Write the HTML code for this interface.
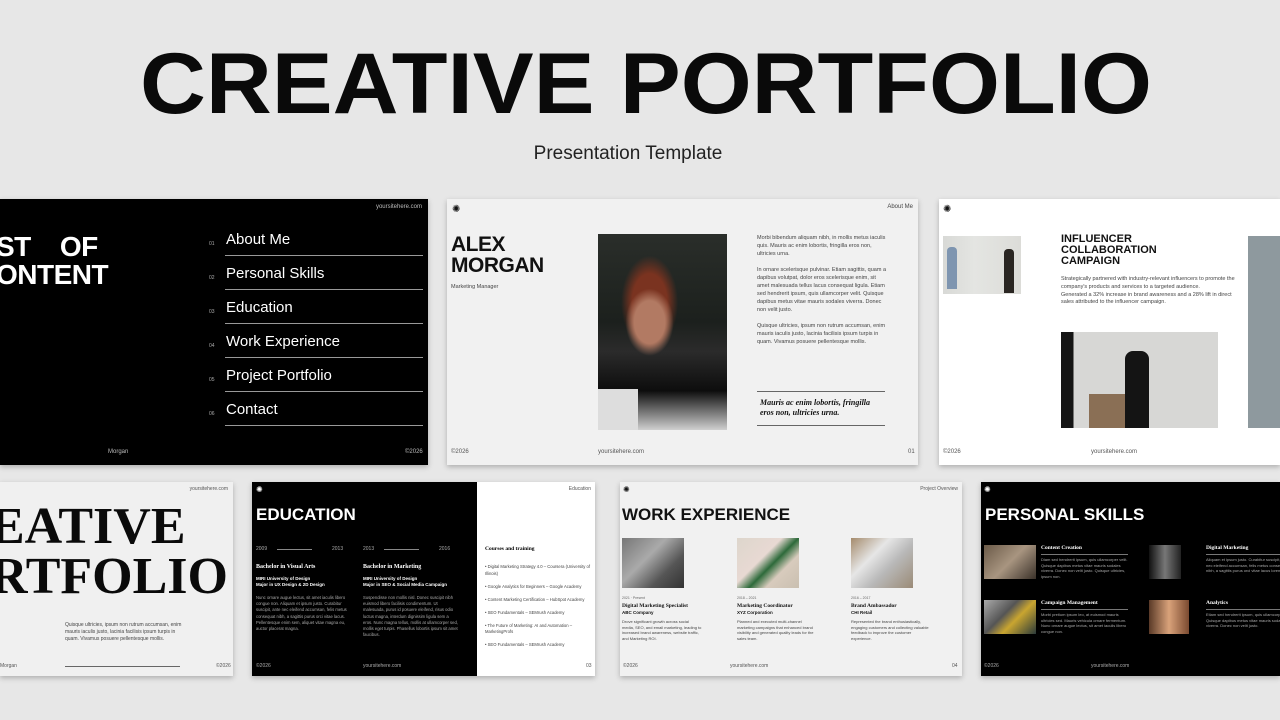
<!DOCTYPE html>
<html><head><meta charset="utf-8"><style>
*{margin:0;padding:0;box-sizing:border-box}
body{width:1280px;height:720px;background:#e7e7e7;position:relative;overflow:hidden;font-family:"Liberation Sans",sans-serif}
.a{position:absolute}
.s{position:absolute;overflow:hidden;box-shadow:0 2px 5px rgba(0,0,0,.25)}
.t{position:absolute;white-space:nowrap}
.sm{font-size:5.5px;line-height:8px;color:#555}
.w .sm{color:#aaa}
.ser{font-family:"Liberation Serif",serif;font-weight:bold}
.ln{position:absolute;height:1px}
</style></head><body>
<svg class="a" style="left:0;top:0" width="1280" height="180">
<text x="140" y="113" textLength="1012" lengthAdjust="spacingAndGlyphs" font-family="Liberation Sans" font-weight="bold" font-size="86" fill="#0a0a0a">CREATIVE PORTFOLIO</text>
<text x="628" y="159" text-anchor="middle" font-family="Liberation Sans" font-size="19" fill="#222">Presentation Template</text>
</svg>

<!-- Slide A -->
<div class="s" style="left:0;top:199px;width:428px;height:266px;background:#000;color:#fff">
 <div class="t" style="left:-4px;top:34px;font-size:28px;line-height:28px;font-weight:bold;letter-spacing:-0.5px">ST&nbsp;&nbsp;&nbsp;&nbsp;OF<br>ONTENT</div>
 <div class="t" style="right:6px;top:5px;font-size:6px;color:#bbb">yoursitehere.com</div>
 <div class="t" style="left:209px;top:28px;font-size:5px;color:#aaa;line-height:34px">01<br>02<br>03<br>04<br>05<br>06</div>
 <div class="t" style="left:226px;top:24px;font-size:15px;line-height:34px">About Me<br>Personal Skills<br>Education<br>Work Experience<br>Project Portfolio<br>Contact</div>
 <div class="ln" style="left:225px;width:198px;top:56px;background:#999"></div>
 <div class="ln" style="left:225px;width:198px;top:90px;background:#999"></div>
 <div class="ln" style="left:225px;width:198px;top:124px;background:#999"></div>
 <div class="ln" style="left:225px;width:198px;top:158px;background:#999"></div>
 <div class="ln" style="left:225px;width:198px;top:192px;background:#999"></div>
 <div class="ln" style="left:225px;width:198px;top:226px;background:#999"></div>
 <div class="t" style="left:108px;top:250px;font-size:6px;color:#bbb">Morgan</div>
 <div class="t" style="left:405px;top:250px;font-size:6px;color:#bbb">©2026</div>
</div>

<!-- Slide B -->
<div class="s" style="left:447px;top:199px;width:471px;height:266px;background:#f1f1f1;color:#111">
 <div class="t" style="left:5px;top:5px;font-size:10px">✺</div>
 <div class="t" style="right:5px;top:5px;font-size:6px;color:#444">About Me</div>
 <div class="t" style="left:4px;top:35px;font-size:21px;line-height:21px;font-weight:bold;letter-spacing:-0.5px">ALEX<br>MORGAN</div>
 <div class="t" style="left:4px;top:85px;font-size:5.5px;color:#444">Marketing Manager</div>
 <div class="a" style="left:151px;top:35px;width:129px;height:196px;background:radial-gradient(ellipse at 40% 45%,#b27a63 0 14%,transparent 22%),radial-gradient(ellipse at 40% 35%,#7a3320 0 16%,transparent 26%),linear-gradient(180deg,#2a2e2a 0%,#1c201d 45%,#2b2b2b 60%,#0d0d0d 80%,#cfcfcf 100%)"></div>
 <div class="a" style="left:151px;top:190px;width:40px;height:41px;background:#ddd"></div>
 <div class="a sm" style="left:310px;top:35px;width:130px;white-space:normal;color:#444">Morbi bibendum aliquam nibh, in mollis metus iaculis quis. Mauris ac enim lobortis, fringilla eros non, ultricies urna.<br><br>In ornare scelerisque pulvinar. Etiam sagittis, quam a dapibus volutpat, dolor eros scelerisque enim, sit amet malesuada tellus lacus consequat ligula. Etiam sed hendrerit ipsum, quis ullamcorper velit. Quisque dapibus metus vitae mauris sodales viverra. Donec non velit justo.<br><br>Quisque ultricies, ipsum non rutrum accumsan, enim mauris iaculis justo, lacinia facilisis ipsum turpis in quam. Vivamus posuere pellentesque mollis.</div>
 <div class="ln" style="left:310px;width:128px;top:192px;background:#666"></div>
 <div class="t ser" style="left:313px;top:199px;font-size:8px;line-height:10px;font-style:italic">Mauris ac enim lobortis, fringilla<br>eros non, ultricies urna.</div>
 <div class="ln" style="left:310px;width:128px;top:226px;background:#666"></div>
 <div class="t" style="left:4px;top:250px;font-size:6px;color:#555">©2026</div>
 <div class="t" style="left:151px;top:250px;font-size:6px;color:#555">yoursitehere.com</div>
 <div class="t" style="left:461px;top:250px;font-size:6px;color:#555">01</div>
</div>

<!-- Slide C -->
<div class="s" style="left:939px;top:199px;width:341px;height:266px;background:#fff;color:#111">
 <div class="t" style="left:4px;top:5px;font-size:10px">✺</div>
 <div class="a" style="left:4px;top:37px;width:78px;height:58px;background:linear-gradient(90deg,#d8d9d6 0%,#e4e5e2 40%,#dcdcd8 100%)"></div>
 <div class="a" style="left:8px;top:48px;width:10px;height:42px;background:#7e95b0;border-radius:4px 4px 0 0"></div>
 <div class="a" style="left:65px;top:50px;width:10px;height:44px;background:#2a2622;border-radius:4px 4px 0 0"></div>
 <div class="t" style="left:122px;top:35px;font-size:11px;line-height:11px;font-weight:bold">INFLUENCER<br>COLLABORATION<br>CAMPAIGN</div>
 <div class="a sm" style="left:122px;top:77px;width:175px;white-space:normal;font-size:5.5px;line-height:7.8px;color:#444">Strategically partnered with industry-relevant influencers to promote the company's products and services to a targeted audience.<br>Generated a 32% increase in brand awareness and a 28% lift in direct sales attributed to the influencer campaign.</div>
 <div class="a" style="left:122px;top:133px;width:157px;height:96px;background:linear-gradient(90deg,#151515 0 8%,#d7d7d5 8% 100%)"></div>
 <div class="a" style="left:150px;top:195px;width:40px;height:34px;background:#8a6f55"></div>
 <div class="a" style="left:186px;top:152px;width:24px;height:77px;background:#141414;border-radius:8px 8px 0 0"></div>
 <div class="a" style="left:309px;top:37px;width:32px;height:192px;background:#8e999e"></div>
 <div class="t" style="left:4px;top:250px;font-size:6px;color:#555">©2026</div>
 <div class="t" style="left:152px;top:250px;font-size:6px;color:#555">yoursitehere.com</div>
</div>

<!-- Slide D -->
<div class="s" style="left:0;top:482px;width:233px;height:194px;background:#f0f0f0;color:#0a0a0a">
 <div class="t" style="right:5px;top:4px;font-size:5px;color:#555">yoursitehere.com</div>
 <div class="t ser" style="left:-10px;top:20px;font-size:52px;line-height:50px">EATIVE<br>RTFOLIO</div>
 <div class="a sm" style="left:65px;top:140px;width:125px;white-space:normal;font-size:5px;line-height:7px;color:#444">Quisque ultricies, ipsum non rutrum accumsan, enim mauris iaculis justo, lacinia facilisis ipsum turpis in quam. Vivamus posuere pellentesque mollis.</div>
 <div class="t" style="left:0;top:181px;font-size:5px;color:#555">Morgan</div>
 <div class="ln" style="left:65px;width:115px;top:184px;background:#666"></div>
 <div class="t" style="left:216px;top:181px;font-size:5px;color:#555">©2026</div>
</div>

<!-- Slide E -->
<div class="s" style="left:252px;top:482px;width:343px;height:194px;background:#fff">
 <div class="a w" style="left:0;top:0;width:225px;height:194px;background:#000;color:#fff">
  <div class="t" style="left:4px;top:3px;font-size:8px">✺</div>
  <div class="t" style="left:4px;top:23px;font-size:17px;font-weight:bold">EDUCATION</div>
  <div class="t" style="left:4px;top:64px;font-size:5px;color:#aaa">2009</div>
  <div class="ln" style="left:25px;width:35px;top:67px;background:#888"></div>
  <div class="t" style="left:80px;top:64px;font-size:5px;color:#aaa">2013</div>
  <div class="t" style="left:111px;top:64px;font-size:5px;color:#aaa">2013</div>
  <div class="ln" style="left:132px;width:35px;top:67px;background:#888"></div>
  <div class="t" style="left:187px;top:64px;font-size:5px;color:#aaa">2016</div>
  <div class="t ser" style="left:4px;top:82px;font-size:6px">Bachelor in Visual Arts</div>
  <div class="t" style="left:4px;top:94px;font-size:4.5px;line-height:6px;font-weight:bold">MIRI University of Design<br>Major in UX Design &amp; 2D Design</div>
  <div class="t ser" style="left:111px;top:82px;font-size:6px">Bachelor in Marketing</div>
  <div class="t" style="left:111px;top:94px;font-size:4.5px;line-height:6px;font-weight:bold">MIRI University of Design<br>Major in SEO &amp; Social Media Campaign</div>
  <div class="a sm" style="left:4px;top:113px;width:95px;white-space:normal;font-size:4.2px;line-height:6.2px">Nunc ornare augue lectus, sit amet iaculis libero congue non. Aliquam et ipsum justo. Curabitur suscipit, ante nec eleifend accumsan, felis metus consequat nibh, a sagittis purus orci vitae lacus. Pellentesque enim sem, aliquet vitae magna eu, auctor placerat magna.</div>
  <div class="a sm" style="left:111px;top:113px;width:95px;white-space:normal;font-size:4.2px;line-height:6.2px">Suspendisse non mollis nisl. Donec suscipit nibh euismod libero facilisis condimentum. Ut malesuada, purus id posuere eleifend, risus odio luctus magna, interdum dignissim ligula sem a eros. Nunc magna tellus, mollis at ullamcorper sed, mollis eget turpis. Phasellus lobortis ipsum sit amet faucibus.</div>
  <div class="t" style="left:4px;top:181px;font-size:5px;color:#aaa">©2026</div>
  <div class="t" style="left:111px;top:181px;font-size:5px;color:#aaa">yoursitehere.com</div>
 </div>
 <div class="t" style="right:4px;top:4px;font-size:5px;color:#555">Education</div>
 <div class="t ser" style="left:233px;top:64px;font-size:5.5px">Courses and training</div>
 <div class="a sm" style="left:233px;top:82px;width:108px;white-space:normal;font-size:4.2px;line-height:6.5px;color:#444">• Digital Marketing Strategy 4.0 – Coursera (University of Illinois)<br><br>• Google Analytics for Beginners – Google Academy<br><br>• Content Marketing Certification – HubSpot Academy<br><br>• SEO Fundamentals – SEMrush Academy<br><br>• The Future of Marketing: AI and Automation – MarketingProfs<br><br>• SEO Fundamentals – SEMrush Academy</div>
 <div class="t" style="left:334px;top:181px;font-size:5px;color:#555">03</div>
</div>

<!-- Slide F -->
<div class="s" style="left:620px;top:482px;width:342px;height:194px;background:#f1f1f1;color:#111">
 <div class="t" style="left:3px;top:3px;font-size:8px">✺</div>
 <div class="t" style="right:4px;top:4px;font-size:5px;color:#555">Project Overview</div>
 <div class="t" style="left:2px;top:23px;font-size:17px;font-weight:bold">WORK EXPERIENCE</div>
 <div class="a" style="left:2px;top:56px;width:62px;height:50px;background:linear-gradient(135deg,#777 0%,#aaa 40%,#555 70%,#333 100%)"></div>
 <div class="a" style="left:117px;top:56px;width:62px;height:50px;background:linear-gradient(135deg,#ddd6cc 0%,#e8d9d3 40%,#2d6a3a 55%,#d8cbbd 70%,#c9bfb0 100%)"></div>
 <div class="a" style="left:231px;top:56px;width:62px;height:50px;background:linear-gradient(135deg,#a58b6c 0%,#e6e6e6 35%,#b9b9b9 60%,#9a8a76 100%)"></div>
 <div class="a" style="left:2px;top:114px;width:80px">
  <div style="font-size:3.5px;color:#666">2021 · Present</div>
  <div class="ser" style="font-size:5.5px;margin-top:3px">Digital Marketing Specialist</div>
  <div style="font-size:4.5px;font-weight:bold;margin-top:1px">ABC Company</div>
  <div class="sm" style="font-size:4px;line-height:5.6px;margin-top:4px;color:#444;white-space:normal">Drove significant growth across social media, SEO, and email marketing, leading to increased brand awareness, website traffic, and Marketing ROI.</div>
 </div>
 <div class="a" style="left:117px;top:114px;width:80px">
  <div style="font-size:3.5px;color:#666">2018 – 2021</div>
  <div class="ser" style="font-size:5.5px;margin-top:3px">Marketing Coordinator</div>
  <div style="font-size:4.5px;font-weight:bold;margin-top:1px">XYZ Corporation</div>
  <div class="sm" style="font-size:4px;line-height:5.6px;margin-top:4px;color:#444;white-space:normal">Planned and executed multi-channel marketing campaigns that enhanced brand visibility and generated quality leads for the sales team.</div>
 </div>
 <div class="a" style="left:231px;top:114px;width:80px">
  <div style="font-size:3.5px;color:#666">2016 – 2017</div>
  <div class="ser" style="font-size:5.5px;margin-top:3px">Brand Ambassador</div>
  <div style="font-size:4.5px;font-weight:bold;margin-top:1px">CHI Retail</div>
  <div class="sm" style="font-size:4px;line-height:5.6px;margin-top:4px;color:#444;white-space:normal">Represented the brand enthusiastically, engaging customers and collecting valuable feedback to improve the customer experience.</div>
 </div>
 <div class="t" style="left:3px;top:181px;font-size:5px;color:#555">©2026</div>
 <div class="t" style="left:110px;top:181px;font-size:5px;color:#555">yoursitehere.com</div>
 <div class="t" style="left:332px;top:181px;font-size:5px;color:#555">04</div>
</div>

<!-- Slide G -->
<div class="s w" style="left:981px;top:482px;width:299px;height:194px;background:#000;color:#fff">
 <div class="t" style="left:3px;top:3px;font-size:8px">✺</div>
 <div class="t" style="left:4px;top:23px;font-size:17px;font-weight:bold">PERSONAL SKILLS</div>
 <div class="a" style="left:3px;top:63px;width:52px;height:34px;background:linear-gradient(135deg,#6b5a48,#a89580 50%,#3a3129)"></div>
 <div class="a" style="left:3px;top:118px;width:52px;height:34px;background:linear-gradient(135deg,#aaa,#555 40%,#c9a530 60%,#2b3a3a)"></div>
 <div class="a" style="left:168px;top:63px;width:32px;height:34px;background:linear-gradient(90deg,#111,#777 50%,#222)"></div>
 <div class="a" style="left:168px;top:118px;width:40px;height:34px;background:linear-gradient(90deg,#5a3a28,#d9a27a 50%,#7a4a30)"></div>
 <div class="t ser" style="left:60px;top:63px;font-size:5.5px">Content Creation</div>
 <div class="ln" style="left:60px;width:87px;top:72px;background:#777"></div>
 <div class="a sm" style="left:60px;top:75px;width:87px;white-space:normal;font-size:4px;line-height:5.6px">Diam sed hendrerit ipsum, quis ullamcorper velit. Quisque dapibus metus vitae mauris sodales viverra. Donec non velit justo. Quisque ultricies, ipsum non.</div>
 <div class="t ser" style="left:60px;top:118px;font-size:5.5px">Campaign Management</div>
 <div class="ln" style="left:60px;width:87px;top:127px;background:#777"></div>
 <div class="a sm" style="left:60px;top:130px;width:87px;white-space:normal;font-size:4px;line-height:5.6px">Morbi pretium ipsum leo, at euismod mauris ultricies sed. Mauris vehicula ornare fermentum. Nunc ornare augue lectus, sit amet iaculis libero congue non.</div>
 <div class="t ser" style="left:225px;top:63px;font-size:5.5px">Digital Marketing</div>
 <div class="ln" style="left:225px;width:80px;top:72px;background:#777"></div>
 <div class="a sm" style="left:225px;top:75px;width:90px;white-space:normal;font-size:4px;line-height:5.6px">Aliquam et ipsum justo. Curabitur suscipit, ante nec eleifend accumsan, felis metus consequat nibh, a sagittis purus orci vitae lacus lorem.</div>
 <div class="t ser" style="left:225px;top:118px;font-size:5.5px">Analytics</div>
 <div class="ln" style="left:225px;width:80px;top:127px;background:#777"></div>
 <div class="a sm" style="left:225px;top:130px;width:90px;white-space:normal;font-size:4px;line-height:5.6px">Etiam sed hendrerit ipsum, quis ullamcorper velit. Quisque dapibus metus vitae mauris sodales viverra. Donec non velit justo.</div>
 <div class="t" style="left:3px;top:181px;font-size:5px;color:#aaa">©2026</div>
 <div class="t" style="left:110px;top:181px;font-size:5px;color:#aaa">yoursitehere.com</div>
</div>
</body></html>
